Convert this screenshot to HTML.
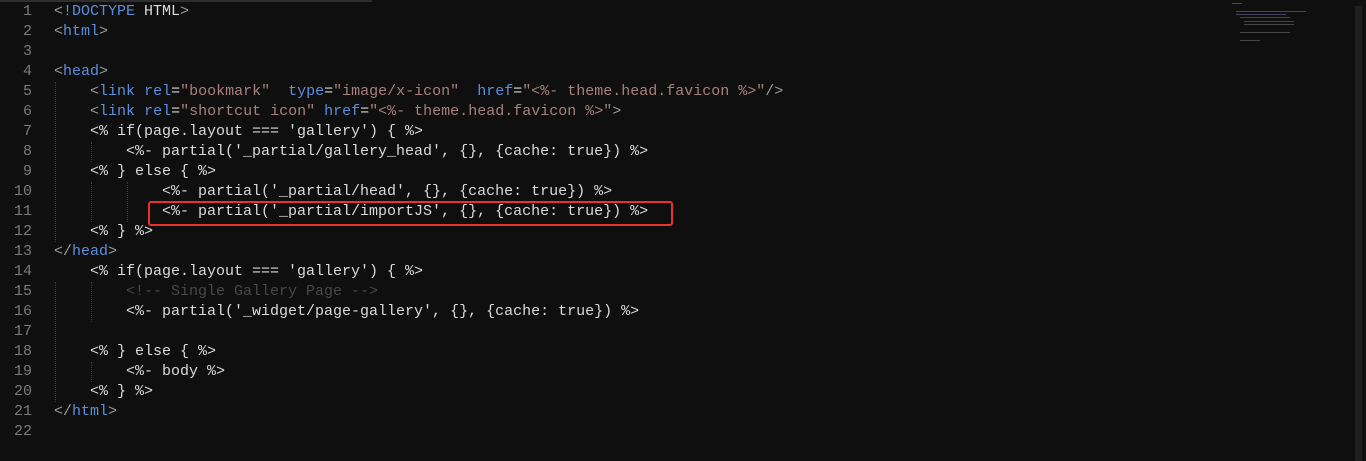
<!DOCTYPE html>
<html><head><style>
html,body{margin:0;padding:0;background:#0f0f0f;width:1366px;height:461px;overflow:hidden;position:relative}
.top{position:absolute;left:0;top:0;width:372px;height:2px;background:#2e2e2e}
.ln{position:absolute;left:0;width:32px;text-align:right;color:#7a7a7a;font:15px/20px "Liberation Mono",monospace}
.code{position:absolute;left:54px;white-space:pre;color:#dadada;font:15px/20px "Liberation Mono",monospace}
.t{color:#5b8fdc}.s{color:#a8807c}.c{color:#484848}.p{color:#9a9a9a}
.g{position:absolute;width:0;border-left:1px dotted #3a3a3a}
.box{position:absolute;left:148px;top:201px;width:521px;height:21px;border:2px solid #e8322b;border-radius:3px}
.sb{position:absolute;left:1355px;top:6px;width:7px;height:455px;background:#1f1f1f}
.mm{position:absolute;height:1px;background:#3c4a66}
</style></head><body>
<div class="top"></div>
<div class="sb"></div>
<div class="mm" style="left:1232px;top:3px;width:10px"></div>
<div class="mm" style="left:1236px;top:11px;width:70px;background:#4a4360"></div>
<div class="mm" style="left:1236px;top:14px;width:50px;background:#4a4360"></div>
<div class="mm" style="left:1240px;top:17px;width:50px;background:#444"></div>
<div class="mm" style="left:1244px;top:21px;width:50px;background:#444"></div>
<div class="mm" style="left:1244px;top:24px;width:50px;background:#444"></div>
<div class="mm" style="left:1240px;top:32px;width:50px;background:#444"></div>
<div class="mm" style="left:1240px;top:40px;width:20px;background:#444"></div>
<div class="g" style="left:55px;top:82px;height:160px"></div>
<div class="g" style="left:91px;top:142px;height:20px"></div>
<div class="g" style="left:91px;top:182px;height:40px"></div>
<div class="g" style="left:127px;top:182px;height:40px"></div>
<div class="g" style="left:55px;top:282px;height:120px"></div>
<div class="g" style="left:91px;top:282px;height:40px"></div>
<div class="g" style="left:91px;top:362px;height:20px"></div>
<div class="box"></div>
<div class="ln" style="top:2px">1</div><div class="code" style="top:2px"><span class="p">&lt;</span><span class="t">!DOCTYPE</span> HTML<span class="p">&gt;</span></div>
<div class="ln" style="top:22px">2</div><div class="code" style="top:22px"><span class="p">&lt;</span><span class="t">html</span><span class="p">&gt;</span></div>
<div class="ln" style="top:42px">3</div>
<div class="ln" style="top:62px">4</div><div class="code" style="top:62px"><span class="p">&lt;</span><span class="t">head</span><span class="p">&gt;</span></div>
<div class="ln" style="top:82px">5</div><div class="code" style="top:82px">    <span class="p">&lt;</span><span class="t">link</span> <span class="t">rel</span>=<span class="s">"bookmark"</span>  <span class="t">type</span>=<span class="s">"image/x-icon"</span>  <span class="t">href</span>=<span class="s">"&lt;%- theme.head.favicon %&gt;"</span><span class="p">/&gt;</span></div>
<div class="ln" style="top:102px">6</div><div class="code" style="top:102px">    <span class="p">&lt;</span><span class="t">link</span> <span class="t">rel</span>=<span class="s">"shortcut icon"</span> <span class="t">href</span>=<span class="s">"&lt;%- theme.head.favicon %&gt;"</span><span class="p">&gt;</span></div>
<div class="ln" style="top:122px">7</div><div class="code" style="top:122px">    &lt;% if(page.layout === 'gallery') { %&gt;</div>
<div class="ln" style="top:142px">8</div><div class="code" style="top:142px">        &lt;%- partial('_partial/gallery_head', {}, {cache: true}) %&gt;</div>
<div class="ln" style="top:162px">9</div><div class="code" style="top:162px">    &lt;% } else { %&gt;</div>
<div class="ln" style="top:182px">10</div><div class="code" style="top:182px">            &lt;%- partial('_partial/head', {}, {cache: true}) %&gt;</div>
<div class="ln" style="top:202px">11</div><div class="code" style="top:202px">            &lt;%- partial('_partial/importJS', {}, {cache: true}) %&gt;</div>
<div class="ln" style="top:222px">12</div><div class="code" style="top:222px">    &lt;% } %&gt;</div>
<div class="ln" style="top:242px">13</div><div class="code" style="top:242px"><span class="p">&lt;/</span><span class="t">head</span><span class="p">&gt;</span></div>
<div class="ln" style="top:262px">14</div><div class="code" style="top:262px">    &lt;% if(page.layout === 'gallery') { %&gt;</div>
<div class="ln" style="top:282px">15</div><div class="code" style="top:282px">        <span class="c">&lt;!-- Single Gallery Page --&gt;</span></div>
<div class="ln" style="top:302px">16</div><div class="code" style="top:302px">        &lt;%- partial('_widget/page-gallery', {}, {cache: true}) %&gt;</div>
<div class="ln" style="top:322px">17</div>
<div class="ln" style="top:342px">18</div><div class="code" style="top:342px">    &lt;% } else { %&gt;</div>
<div class="ln" style="top:362px">19</div><div class="code" style="top:362px">        &lt;%- body %&gt;</div>
<div class="ln" style="top:382px">20</div><div class="code" style="top:382px">    &lt;% } %&gt;</div>
<div class="ln" style="top:402px">21</div><div class="code" style="top:402px"><span class="p">&lt;/</span><span class="t">html</span><span class="p">&gt;</span></div>
<div class="ln" style="top:422px">22</div>
</body></html>
